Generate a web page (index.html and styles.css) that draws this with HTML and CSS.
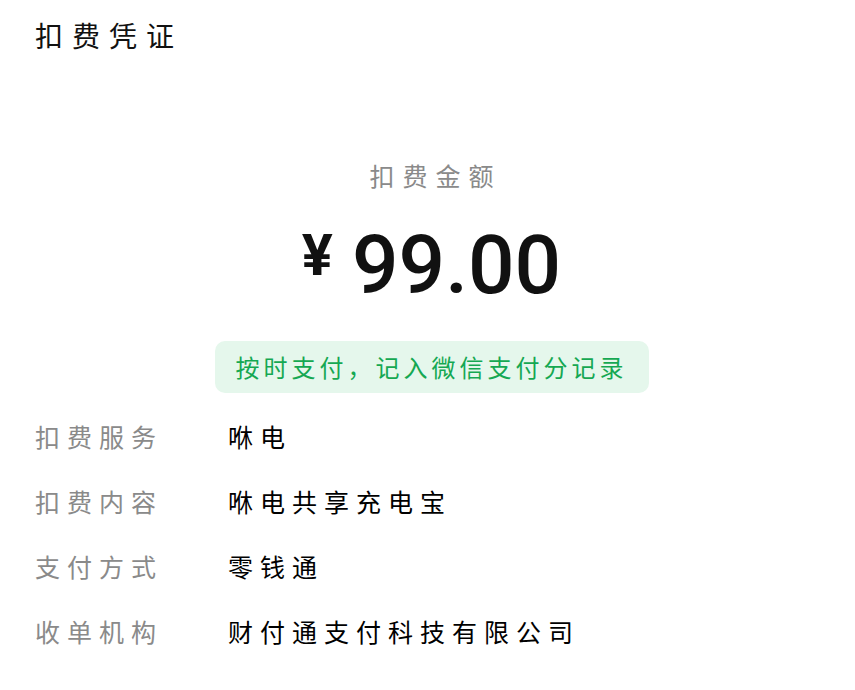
FILE: index.html
```html
<!DOCTYPE html>
<html lang="zh-CN">
<head>
    <meta charset="UTF-8">
    <title>扣费凭证</title>
    <link rel="stylesheet" href="styles.css">
</head>
<body>
    <!-- 标题 -->
    <div class="title">扣费凭证</div>

    <!-- 金额 -->
    <div class="amount-box">
        <div class="amount-label">扣费金额</div>
        <div class="amount"><span class="yen">¥</span><span class="num">99.00</span></div>
        <div class="tip">按时支付，记入微信支付分记录</div>
    </div>

    <!-- 明细 -->
    <div class="detail">
        <div class="row"><span class="label">扣费服务</span><span class="value">咻电</span></div>
        <div class="row"><span class="label">扣费内容</span><span class="value">咻电共享充电宝</span></div>
        <div class="row"><span class="label">支付方式</span><span class="value">零钱通</span></div>
        <div class="row"><span class="label">收单机构</span><span class="value">财付通支付科技有限公司</span></div>
    </div>
</body>
</html>
```

FILE: styles.css
```css
body {
    margin: 0;
    background: #fff;
    font-family: "Noto Sans CJK SC", "Noto Sans", sans-serif;
    color: #111;
}

.title {
    padding: 15px 0 0 35px;
    font-size: 28px;
    line-height: 40px;
    letter-spacing: 9px;
}

.amount-box {
    display: flex;
    flex-direction: column;
    align-items: center;
    margin-top: 100px;
}

.amount-label {
    font-size: 25px;
    line-height: 40px;
    letter-spacing: 8px;
    color: #8a8a8a;
    margin-left: 16px;
}

.amount {
    display: flex;
    align-items: baseline;
    margin: 20px 0 0 8px;
    height: 100px;
}

.yen {
    font-family: Roboto, "Liberation Sans", sans-serif;
    font-size: 58px;
    font-weight: 700;
    margin-right: 19px;
    position: relative;
    top: -18px;
}

.num {
    font-family: Roboto, "Liberation Sans", sans-serif;
    font-size: 82px;
    font-weight: 500;
    line-height: 100px;
}

.tip {
    margin: 26px 0 0 8px;
    height: 52px;
    width: 434px;
    box-sizing: border-box;
    border-radius: 10px;
    background: #e5f7ec;
    color: #15a852;
    font-size: 24px;
    line-height: 52px;
    letter-spacing: 4px;
    text-align: center;
}

.detail {
    margin-top: 10px;
    padding-left: 35px;
}

.row {
    display: flex;
    height: 65px;
    align-items: center;
    font-size: 25px;
    letter-spacing: 7px;
}

.label {
    width: 193px;
    color: #8a8a8a;
}

.value {
    color: #000;
}
```
